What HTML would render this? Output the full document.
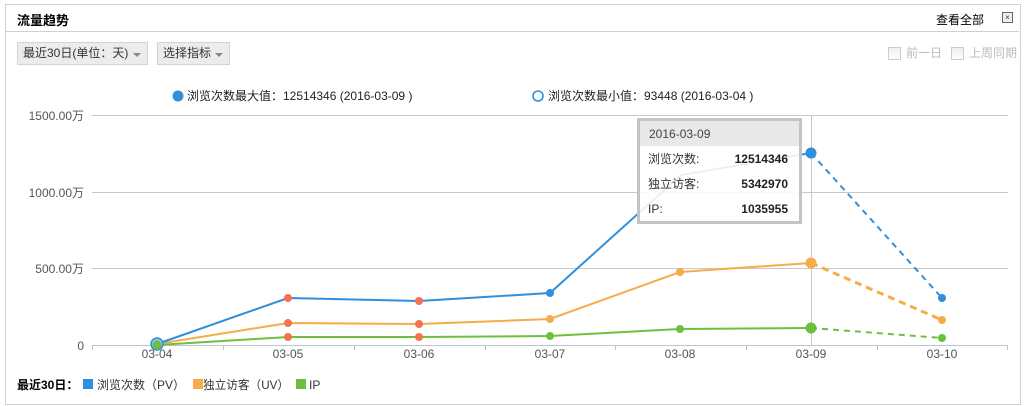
<!DOCTYPE html>
<html><head><meta charset="utf-8"><style>
body{margin:0;background:#fff;font-family:"Liberation Sans","Noto Sans CJK SC",sans-serif;}
.box{position:absolute;left:5px;top:4px;width:1014px;height:399px;border:1px solid #d0d0d0;}
.t{position:absolute;font-size:12px;color:#333;white-space:nowrap;}
.btn{position:absolute;top:42px;height:23px;background:#ececec;border:1px solid #d3d3d3;font-size:12px;color:#333;line-height:21px;padding:0 0 0 5px;box-sizing:border-box;white-space:nowrap;overflow:hidden;}
.tri{position:absolute;right:6px;top:10px;width:0;height:0;border-left:4px solid transparent;border-right:4px solid transparent;border-top:4px solid #888;}
.cb{display:inline-block;width:11px;height:11px;border:1px solid #ccc;background:linear-gradient(#eee,#fff);vertical-align:middle;margin-right:5px;}
</style></head><body>
<div class="box"></div>
<div style="position:absolute;left:6px;top:31px;width:1013px;border-top:1px solid #d0d0d0"></div>
<div class="t" style="left:17px;top:10px;font-weight:bold;font-size:13px;color:#000">流量趋势</div>
<div class="t" style="left:936px;top:11px;color:#000">查看全部</div>
<div style="position:absolute;left:1002px;top:12px;width:9px;height:9px;border:1px solid #666;background:#eee;font-size:8px;line-height:9px;text-align:center;color:#333">×</div>
<div class="btn" style="left:17px;width:131px">最近30日(单位：天)<span class="tri"></span></div>
<div class="btn" style="left:157px;width:73px">选择指标<span class="tri"></span></div>
<div class="t" style="left:888px;top:44px;color:#bbb"><span class="cb"></span>前一日</div>
<div class="t" style="left:951px;top:44px;color:#bbb"><span class="cb"></span>上周同期</div>
<svg style="position:absolute;left:0;top:0" width="1024" height="406">
<g font-family="Liberation Sans,Noto Sans CJK SC,sans-serif" font-size="12">
<circle cx="178" cy="96" r="5.5" fill="#2f8fdc"/>
<text x="187" y="100" fill="#222">浏览次数最大值：12514346 (2016-03-09 )</text>
<circle cx="538" cy="96" r="5" fill="#fff" stroke="#2f8fdc" stroke-width="1.6"/>
<text x="548" y="100" fill="#222">浏览次数最小值：93448 (2016-03-04 )</text>
<g stroke="#c8c8c8" stroke-width="1">
<line x1="92" y1="115.5" x2="1008" y2="115.5"/><line x1="92" y1="192.5" x2="1008" y2="192.5"/><line x1="92" y1="268.5" x2="1008" y2="268.5"/>
<line x1="811.5" y1="115" x2="811.5" y2="345"/>
</g>
<line x1="92" y1="345.5" x2="1008" y2="345.5" stroke="#b8c4d8"/>
<g stroke="#b8c4d8"><line x1="92.5" y1="345" x2="92.5" y2="350"/><line x1="223.5" y1="345" x2="223.5" y2="350"/><line x1="354.5" y1="345" x2="354.5" y2="350"/><line x1="485.5" y1="345" x2="485.5" y2="350"/><line x1="615.5" y1="345" x2="615.5" y2="350"/><line x1="746.5" y1="345" x2="746.5" y2="350"/><line x1="877.5" y1="345" x2="877.5" y2="350"/><line x1="1007.5" y1="345" x2="1007.5" y2="350"/></g>
<g fill="#555" text-anchor="end"><text x="84" y="120">1500.00万</text><text x="84" y="197">1000.00万</text><text x="84" y="273">500.00万</text><text x="84" y="350">0</text></g>
<g fill="#555" text-anchor="middle"><text x="157" y="358">03-04</text><text x="288" y="358">03-05</text><text x="419" y="358">03-06</text><text x="550" y="358">03-07</text><text x="680" y="358">03-08</text><text x="811" y="358">03-09</text><text x="942" y="358">03-10</text></g>
<g fill="none" stroke-width="2">
<polyline stroke="#6fbf3e" points="157,345 288,337 419,337 550,336 680,329 811,328"/>
<polyline stroke="#6fbf3e" stroke-dasharray="6,5" points="811,328 942,338"/>
<polyline stroke="#f5ac4b" points="157,344 288,323 419,324 550,319 680,272 811,263"/>
<polyline stroke="#f5ac4b" stroke-width="3" stroke-dasharray="7,5" points="811,263 942,320"/>
<polyline stroke="#2f8fdc" points="157,344 288,298 419,301 550,293 681,175 811,153"/>
<polyline stroke="#2f8fdc" stroke-dasharray="6,5" points="811,153 942,298"/>
</g>
<g fill="#f4734e"><circle cx="288" cy="298" r="4"/><circle cx="419" cy="301" r="4"/><circle cx="288" cy="323" r="4"/><circle cx="419" cy="324" r="4"/><circle cx="288" cy="337" r="4"/><circle cx="419" cy="337" r="4"/></g>
<g fill="#2f8fdc"><circle cx="550" cy="293" r="4"/><circle cx="942" cy="298" r="4"/><circle cx="811" cy="153" r="5.5"/><circle cx="157" cy="344" r="6" fill="#8ec4ef" stroke="#2f8fdc" stroke-width="1.5"/></g>
<g fill="#f5ac4b"><circle cx="550" cy="319" r="4"/><circle cx="680" cy="272" r="4"/><circle cx="942" cy="320" r="4"/><circle cx="811" cy="263" r="5.5"/></g>
<g fill="#6fbf3e"><circle cx="550" cy="336" r="4"/><circle cx="680" cy="329" r="4"/><circle cx="942" cy="338" r="4"/><circle cx="811" cy="328" r="5.5"/><circle cx="157" cy="345" r="4.5"/></g>
<rect x="638.5" y="119.5" width="162" height="103" fill="#fff" fill-opacity="0.88" stroke="#c4c4c4" stroke-width="3"/>
<rect x="640" y="121" width="159" height="25" fill="#e8e8e8"/>
<text x="649" y="138" fill="#444">2016-03-09</text>
<g fill="#333"><text x="648" y="163">浏览次数:</text><text x="648" y="188">独立访客:</text><text x="648" y="213">IP:</text></g>
<g fill="#222" font-weight="bold" text-anchor="end"><text x="788" y="163">12514346</text><text x="788" y="188">5342970</text><text x="788" y="213">1035955</text></g>
<text x="17" y="389" fill="#000" font-weight="bold">最近30日：</text>
<rect x="83" y="379" width="10" height="10" fill="#2f8fdc"/><text x="97" y="389" fill="#333" textLength="88" lengthAdjust="spacingAndGlyphs">浏览次数（PV）</text>
<rect x="193" y="379" width="10" height="10" fill="#f5ac4b"/><text x="203" y="389" fill="#333" textLength="86" lengthAdjust="spacingAndGlyphs">独立访客（UV）</text>
<rect x="296" y="379" width="10" height="10" fill="#6fbf3e"/><text x="309" y="389" fill="#333">IP</text>
</g></svg>
</body></html>
